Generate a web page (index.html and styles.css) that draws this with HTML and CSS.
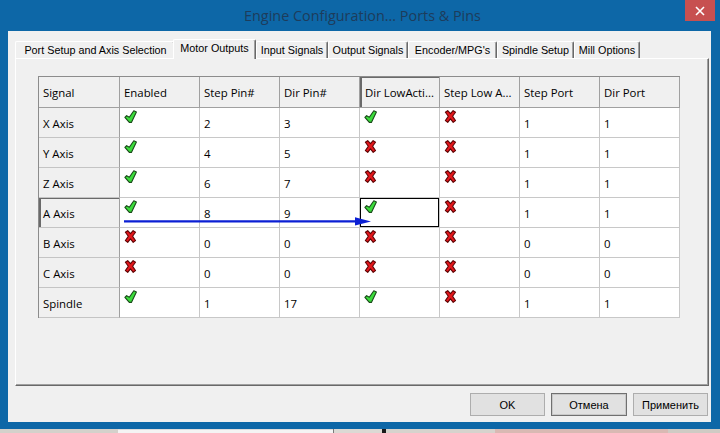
FILE: index.html
```html
<!DOCTYPE html>
<html>
<head>
<meta charset="utf-8">
<title>Engine Configuration... Ports &amp; Pins</title>
<link rel="stylesheet" href="styles.css">
</head>
<body>
<svg class="defs" width="0" height="0" aria-hidden="true">
  <defs>
    <symbol id="ok" viewBox="0 0 13 13">
      <path d="M5.3 12.4 L0.9 7.4 L2.6 5.6 L5.3 7.3 L9.8 0.8 L12.4 1.9 L7.4 12.4 Z" fill="#3bdc3b" stroke="#1a4a1a" stroke-width="1.1" stroke-linejoin="round"/>
    </symbol>
    <symbol id="no" viewBox="0 0 12 13">
      <path d="M0.9 2.3 L3.2 0.6 L6 3.7 L8.6 0.6 L11 2.3 L8.1 6.3 L11 10.6 L8.7 12.4 L6 8.9 L3.2 12.4 L0.9 10.6 L3.8 6.3 Z" fill="#e3161b" stroke="#5e0505" stroke-width="1.1" stroke-linejoin="round"/>
    </symbol>
  </defs>
</svg>

<div class="window">
  <div class="titlebar">
    <div class="title">Engine Configuration... Ports &amp; Pins</div>
    <div class="close"><svg width="10" height="10" viewBox="0 0 10 10"><path d="M1 1L9 9M9 1L1 9" stroke="#fff" stroke-width="1.6"/></svg></div>
  </div>

  <div class="client">
    <div class="tabs">
      <div class="tab t1">Port Setup and Axis Selection</div>
      <div class="tab t2 active">Motor Outputs</div>
      <div class="tab t3">Input Signals</div>
      <div class="tab t4">Output Signals</div>
      <div class="tab t5">Encoder/MPG's</div>
      <div class="tab t6">Spindle Setup</div>
      <div class="tab t7">Mill Options</div>
    </div>

    <div class="panel">
      <div class="grid">
        <div class="hd">Signal</div>
        <div class="hd">Enabled</div>
        <div class="hd">Step Pin#</div>
        <div class="hd">Dir Pin#</div>
        <div class="hd hd-sel">Dir LowActi...</div>
        <div class="hd">Step Low A...</div>
        <div class="hd">Step Port</div>
        <div class="hd">Dir Port</div>

        <div class="rh">X Axis</div>
        <div class="cell ic"><svg class="ico"><use href="#ok"/></svg></div>
        <div class="cell">2</div>
        <div class="cell">3</div>
        <div class="cell ic"><svg class="ico"><use href="#ok"/></svg></div>
        <div class="cell ic"><svg class="ico"><use href="#no"/></svg></div>
        <div class="cell">1</div>
        <div class="cell">1</div>

        <div class="rh">Y Axis</div>
        <div class="cell ic"><svg class="ico"><use href="#ok"/></svg></div>
        <div class="cell">4</div>
        <div class="cell">5</div>
        <div class="cell ic"><svg class="ico"><use href="#no"/></svg></div>
        <div class="cell ic"><svg class="ico"><use href="#no"/></svg></div>
        <div class="cell">1</div>
        <div class="cell">1</div>

        <div class="rh">Z Axis</div>
        <div class="cell ic"><svg class="ico"><use href="#ok"/></svg></div>
        <div class="cell">6</div>
        <div class="cell">7</div>
        <div class="cell ic"><svg class="ico"><use href="#no"/></svg></div>
        <div class="cell ic"><svg class="ico"><use href="#no"/></svg></div>
        <div class="cell">1</div>
        <div class="cell">1</div>

        <div class="rh rh-sel">A Axis</div>
        <div class="cell ic"><svg class="ico"><use href="#ok"/></svg></div>
        <div class="cell">8</div>
        <div class="cell">9</div>
        <div class="cell ic current"><svg class="ico"><use href="#ok"/></svg></div>
        <div class="cell ic"><svg class="ico"><use href="#no"/></svg></div>
        <div class="cell">1</div>
        <div class="cell">1</div>

        <div class="rh">B Axis</div>
        <div class="cell ic"><svg class="ico"><use href="#no"/></svg></div>
        <div class="cell">0</div>
        <div class="cell">0</div>
        <div class="cell ic"><svg class="ico"><use href="#no"/></svg></div>
        <div class="cell ic"><svg class="ico"><use href="#no"/></svg></div>
        <div class="cell">0</div>
        <div class="cell">0</div>

        <div class="rh">C Axis</div>
        <div class="cell ic"><svg class="ico"><use href="#no"/></svg></div>
        <div class="cell">0</div>
        <div class="cell">0</div>
        <div class="cell ic"><svg class="ico"><use href="#no"/></svg></div>
        <div class="cell ic"><svg class="ico"><use href="#no"/></svg></div>
        <div class="cell">0</div>
        <div class="cell">0</div>

        <div class="rh">Spindle</div>
        <div class="cell ic"><svg class="ico"><use href="#ok"/></svg></div>
        <div class="cell">1</div>
        <div class="cell">17</div>
        <div class="cell ic"><svg class="ico"><use href="#ok"/></svg></div>
        <div class="cell ic"><svg class="ico"><use href="#no"/></svg></div>
        <div class="cell">1</div>
        <div class="cell">1</div>

        <svg class="arrow" width="250" height="9" viewBox="0 0 250 9">
          <path d="M0 3.2H231V0.2L247 4.4L231 8.6V5.6H0Z" fill="#0b1fd4"/>
        </svg>
      </div>
    </div>

    <div class="buttons">
      <div class="btn">OK</div>
      <div class="btn btn-default">Отмена</div>
      <div class="btn">Применить</div>
    </div>
  </div>
</div>

<div class="strip">
  <div class="seg s1"></div>
  <div class="seg s2"></div>
  <div class="seg s3"></div>
  <div class="seg s4"></div>
  <div class="seg s5"></div>
  <div class="seg s6"></div>
  <div class="seg s7"></div>
</div>
</body>
</html>
```

FILE: styles.css
```css
* { box-sizing: border-box; }

html, body {
  margin: 0;
  padding: 0;
}

body {
  width: 720px;
  height: 433px;
  overflow: hidden;
  background: #d6d3ce;
  font-family: "Liberation Sans", Arial, sans-serif;
}

.defs {
  position: absolute;
  width: 0;
  height: 0;
  overflow: hidden;
}

.window {
  width: 720px;
  height: 429px;
  background: #0d67a7;
  padding: 0 9px 7px 8px;
  display: flex;
  flex-direction: column;
}

.titlebar {
  height: 31px;
  flex: none;
  display: flex;
  align-items: center;
  justify-content: center;
  position: relative;
}

.title {
  font-family: "Open Sans", "Noto Sans", sans-serif;
  font-size: 14.4px;
  color: #1d3c5b;
  margin-left: 6px;
  margin-top: -1px;
}

.close {
  position: absolute;
  top: 0;
  left: 677px;
  width: 30px;
  height: 21px;
  background: #c75050;
  display: flex;
  align-items: center;
  justify-content: center;
}

.close svg { display: block; }

.client {
  flex: 1;
  background: #f0f0f0;
  padding: 8px 2px 0 7px;
  display: flex;
  flex-direction: column;
}

/* Tabs */
.tabs {
  height: 19px;
  display: flex;
  align-items: flex-end;
  flex: none;
}

.tab {
  height: 17px;
  flex: none;
  font-size: 10.8px;
  color: #000;
  text-align: center;
  line-height: 16px;
  background: #f0f0f0;
  border-top: 1px solid #ffffff;
  border-left: 1px solid #ffffff;
  border-right: 1px solid #696969;
  box-shadow: inset -1px 0 0 #a0a0a0;
  border-radius: 2px 2px 0 0;
}

.tab.active {
  height: 20px;
  margin-bottom: -1px;
  position: relative;
  z-index: 1;
  line-height: 16px;
  padding-bottom: 2px;
}

.t1 { width: 160px; padding-left: 1px; }
.t2 { width: 83px; margin-left: -2px; }
.t3 { width: 72px; }
.t4 { width: 80px; }
.t5 { width: 89px; }
.t6 { width: 77px; }
.t7 { width: 66px; }

/* Panel */
.panel {
  height: 328px;
  flex: none;
  border-top: 1px solid #ffffff;
  border-left: 1px solid #ffffff;
  border-right: 1px solid #696969;
  border-bottom: 1px solid #696969;
  box-shadow: inset -1px -1px 0 #a0a0a0;
  padding: 17px 0 0 22px;
}

/* Grid */
.grid {
  position: relative;
  display: grid;
  grid-template-columns: 81px repeat(7, 80px);
  grid-template-rows: 31px repeat(7, 30px);
  width: 642px;
  border-top: 1px solid #8c8c8c;
  border-left: 1px solid #8c8c8c;
  font-family: "Open Sans", "Noto Sans", sans-serif;
  font-size: 11.4px;
  color: #000;
}

.hd {
  background: #f0f0f0;
  border-right: 1px solid #a0a0a0;
  border-bottom: 1px solid #a0a0a0;
  display: flex;
  align-items: center;
  padding-left: 4px;
  white-space: nowrap;
  overflow: hidden;
}

.hd-sel {
  box-shadow: inset 2px 1px 0 #6a6a6a;
  padding-left: 5px;
}

.rh {
  background: #f0f0f0;
  border-right: 1px solid #a0a0a0;
  border-bottom: 1px solid #c4c4c4;
  display: flex;
  align-items: center;
  padding-left: 4px;
  padding-top: 1px;
}

.rh-sel {
  box-shadow: inset 2px 1px 0 #6a6a6a;
}

.cell {
  background: #ffffff;
  border-right: 1px solid #c8c8c8;
  border-bottom: 1px solid #c8c8c8;
  display: flex;
  align-items: center;
  padding-left: 4px;
  padding-top: 1px;
}

.cell.ic {
  align-items: flex-start;
  padding-top: 2px;
  padding-left: 4px;
}

.cell.current {
  box-shadow: inset 0 0 0 1px #000;
}

.ico {
  width: 13px;
  height: 13px;
  display: block;
}

.arrow {
  position: absolute;
  left: 85px;
  top: 140px;
}

/* Buttons */
.buttons {
  display: flex;
  justify-content: flex-end;
  gap: 6px;
  margin-top: 7px;
  padding-right: 1px;
}

.btn {
  width: 75px;
  height: 23px;
  background: #e1e1e1;
  border: 1px solid #adadad;
  font-size: 11px;
  color: #000;
  display: flex;
  align-items: center;
  justify-content: center;
}

.btn-default {
  width: 76px;
  border-color: #707070;
  box-shadow: inset 0 0 0 1px #c9c9c9;
}

/* Bottom strip (taskbar remnants) */
.strip {
  height: 4px;
  display: flex;
}

.seg { height: 4px; flex: none; }
.s1 { width: 118px; background: #d4d1cb; }
.s2 { width: 215px; background: #f4f4f4; border-top: 1px solid #dcdcdc; }
.s3 { width: 49px; background: #dcd9d4; border-left: 1px solid #7a7a7a; }
.s4 { width: 4px; background: #1a1a1a; }
.s5 { width: 109px; background: #d6d3cd; }
.s6 { width: 173px; background: #d9b9b3; }
.s7 { width: 52px; background: #cfcbc4; }
```
